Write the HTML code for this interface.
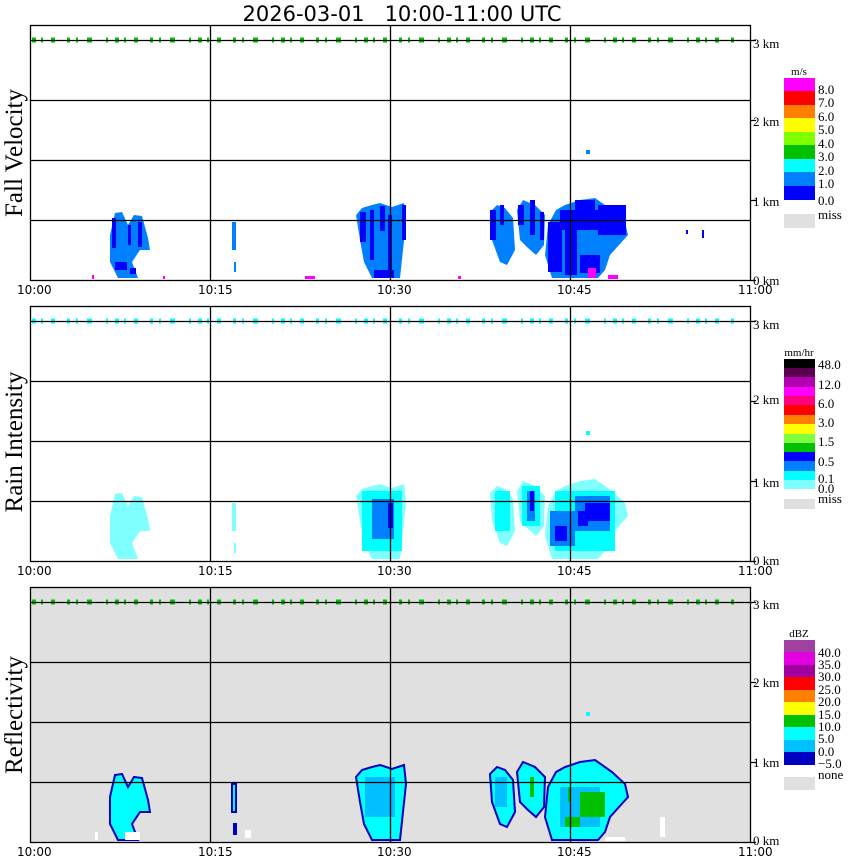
<!DOCTYPE html>
<html><head><meta charset="utf-8"><style>
html,body{margin:0;padding:0;background:#fff;width:850px;height:868px;overflow:hidden}
svg{display:block}
.t{font-family:"DejaVu Sans","Liberation Sans",sans-serif;font-size:12px}
.s{font-family:"Liberation Serif",serif;font-size:13px}
.cb{font-family:"Liberation Serif",serif;font-size:13px}
.yl{font-family:"Liberation Serif",serif;font-size:25px}
</style></head><body>
<svg width="850" height="868" viewBox="0 0 850 868" xmlns="http://www.w3.org/2000/svg">
<defs>
<g id="A"><polygon points="110,235 115,213 122,212 128,225 134,215 142,216 148,238 150,250 140,250 132,262 138,278 118,278 110,262"/></g>
<g id="B"><polygon points="356,215 362,208 372,205 380,203 392,207 404,203 406,222 403,250 400,278 372,278 364,262 360,240"/></g>
<g id="C1"><polygon points="490,212 497,205 505,208 513,218 515,250 507,265 500,262 492,240"/></g>
<g id="C2"><polygon points="517,210 523,200 535,205 545,215 544,245 536,255 528,248 520,240"/></g>
<g id="C3"><polygon points="548,225 556,210 565,205 580,200 595,198 612,210 625,222 628,235 610,255 605,270 598,278 552,278 545,255"/></g>
<g id="Cx"><rect x="232" y="222" width="4" height="28"/><rect x="234" y="262" width="2" height="10"/></g>
</defs>

<text x="402" y="21" text-anchor="middle" font-family="DejaVu Sans,Liberation Sans,sans-serif" font-size="21" style="white-space:pre" xml:space="preserve">2026-03-01   10:00-11:00 UTC</text>

<!-- Panel 1 -->
<g>
<g fill="#0080ff"><use href="#A"/><use href="#B"/><use href="#C1"/><use href="#C2"/><use href="#C3"/><use href="#Cx"/></g>
<g fill="#0000ff">
<rect x="112" y="218" width="4" height="30"/><rect x="128" y="225" width="3" height="20"/><rect x="138" y="222" width="4" height="25"/><rect x="115" y="262" width="12" height="8"/><rect x="130" y="268" width="6" height="6"/>
<rect x="360" y="212" width="6" height="30"/><rect x="370" y="210" width="4" height="50"/><rect x="380" y="206" width="5" height="25"/><rect x="388" y="215" width="4" height="60"/><rect x="402" y="205" width="4" height="35"/><rect x="374" y="270" width="20" height="8"/>
<rect x="490" y="210" width="6" height="30"/><rect x="500" y="205" width="4" height="20"/><rect x="518" y="205" width="6" height="20"/><rect x="530" y="200" width="5" height="35"/><rect x="540" y="212" width="4" height="28"/>
<rect x="548" y="222" width="14" height="50"/><rect x="560" y="210" width="40" height="20"/><rect x="575" y="200" width="20" height="30"/><rect x="598" y="205" width="28" height="30"/><rect x="565" y="230" width="12" height="45"/><rect x="580" y="255" width="20" height="18"/>
</g>
<rect x="588" y="268" width="8" height="10" fill="#ff00ff"/><rect x="608" y="275" width="10" height="4" fill="#ff00ff"/><rect x="92" y="275" width="2" height="4" fill="#ff00ff"/><rect x="305" y="276" width="10" height="3" fill="#ff00ff"/><rect x="163" y="276" width="2" height="3" fill="#ff00ff"/><rect x="458" y="276" width="3" height="3" fill="#ff00ff"/>
<rect x="586" y="150" width="4" height="4" fill="#0080ff"/><rect x="686" y="230" width="2" height="4" fill="#0000ff"/><rect x="702" y="230" width="2" height="8" fill="#0000ff"/>
<line x1="32" y1="40" x2="740" y2="40" stroke="#00c000" stroke-width="5" stroke-dasharray="4 5 2 8 4 12 3 6 2 9 5 14 2 7"/>
</g>

<!-- Panel 2 -->
<g transform="translate(0,281)">
<g fill="#80ffff"><use href="#A"/><use href="#B"/><use href="#C1"/><use href="#C2"/><use href="#C3"/><use href="#Cx"/></g>
<g fill="#00ffff"><rect x="362" y="210" width="40" height="60"/><rect x="495" y="210" width="15" height="40"/><rect x="522" y="205" width="18" height="40"/><rect x="555" y="210" width="60" height="60"/></g>
<g fill="#0080ff"><rect x="372" y="218" width="22" height="40"/><rect x="527" y="210" width="8" height="30"/><rect x="550" y="230" width="25" height="35"/><rect x="575" y="215" width="35" height="35"/></g>
<g fill="#0000ff"><rect x="388" y="222" width="5" height="25"/><rect x="530" y="210" width="4" height="20"/><rect x="555" y="245" width="12" height="15"/><rect x="585" y="222" width="25" height="18"/><rect x="578" y="230" width="10" height="15"/></g>
<rect x="586" y="150" width="4" height="4" fill="#00ffff"/>
<line x1="32" y1="40" x2="740" y2="40" stroke="#00ffff" stroke-width="5" stroke-dasharray="4 5 2 8 4 12 3 6 2 9 5 14 2 7"/>
</g>

<!-- Panel 3 -->
<g transform="translate(0,562)">
<rect x="30" y="25" width="720" height="255" fill="#e0e0e0"/>
<g fill="#00ffff" stroke="#0000c0" stroke-width="2"><use href="#A"/><use href="#B"/><use href="#C1"/><use href="#C2"/><use href="#C3"/><use href="#Cx"/></g>
<g fill="#00c0ff"><rect x="365" y="215" width="30" height="40"/><rect x="495" y="215" width="12" height="30"/><rect x="560" y="225" width="40" height="40"/></g>
<g fill="#00c000"><rect x="580" y="230" width="25" height="25"/><rect x="565" y="255" width="15" height="10"/><rect x="530" y="215" width="4" height="20"/><rect x="568" y="225" width="3" height="15"/></g>
<g fill="#fff"><rect x="125" y="270" width="15" height="8"/><rect x="245" y="268" width="6" height="8"/><rect x="605" y="275" width="20" height="4"/><rect x="660" y="255" width="5" height="20"/><rect x="95" y="270" width="3" height="8"/></g>
<rect x="586" y="150" width="4" height="4" fill="#00ffff"/>
<line x1="32" y1="40" x2="740" y2="40" stroke="#00c000" stroke-width="5" stroke-dasharray="4 5 2 8 4 12 3 6 2 9 5 14 2 7"/>
</g>

<g stroke="#000" stroke-width="1.3" fill="none">
<rect x="30.5" y="25.5" width="720" height="255"/>
<path d="M30 40.5H750M30 100.5H750M30 160.5H750M30 220.5H750M210.5 25V280M390.5 25V280M570.5 25V280"/>
<rect x="30.5" y="306.5" width="720" height="255"/>
<path d="M30 321.5H750M30 381.5H750M30 441.5H750M30 501.5H750M210.5 306V561M390.5 306V561M570.5 306V561"/>
<rect x="30.5" y="587.5" width="720" height="255"/>
<path d="M30 602.5H750M30 662.5H750M30 722.5H750M30 782.5H750M210.5 587V842M390.5 587V842M570.5 587V842"/>
<path d="M750 40.5H756M750 120.5H756M750 200.5H756M750 280.5H756M750 321.5H756M750 401.5H756M750 481.5H756M750 561.5H756M750 602.5H756M750 682.5H756M750 762.5H756M750 842.5H756"/>
</g>

<g class="t">
<text x="17" y="294">10:00</text><text x="198" y="294">10:15</text><text x="377" y="294">10:30</text><text x="557" y="294">10:45</text><text x="738" y="294">11:00</text>
<text x="17" y="575">10:00</text><text x="198" y="575">10:15</text><text x="377" y="575">10:30</text><text x="557" y="575">10:45</text><text x="738" y="575">11:00</text>
<text x="17" y="856">10:00</text><text x="198" y="856">10:15</text><text x="377" y="856">10:30</text><text x="557" y="856">10:45</text><text x="738" y="856">11:00</text>
</g>
<g class="s">
<text x="753" y="48">3 km</text><text x="753" y="126">2 km</text><text x="753" y="206">1 km</text><text x="753" y="285">0 km</text>
<text x="753" y="329">3 km</text><text x="753" y="404">2 km</text><text x="753" y="487">1 km</text><text x="753" y="565">0 km</text>
<text x="753" y="609">3 km</text><text x="753" y="687">2 km</text><text x="753" y="767">1 km</text><text x="753" y="845">0 km</text>
</g>
<g class="yl">
<text transform="translate(22,153) rotate(-90)" text-anchor="middle">Fall Velocity</text>
<text transform="translate(22,442) rotate(-90)" text-anchor="middle">Rain Intensity</text>
<text transform="translate(22,715) rotate(-90)" text-anchor="middle">Reflectivity</text>
</g>

<g>
<rect x="784" y="78" width="31" height="14" fill="#ff00ff"/><rect x="784" y="91" width="31" height="14" fill="#ff0000"/><rect x="784" y="105" width="31" height="14" fill="#ff8000"/><rect x="784" y="118" width="31" height="14" fill="#ffff00"/><rect x="784" y="132" width="31" height="14" fill="#80ff00"/><rect x="784" y="145" width="31" height="14" fill="#00c000"/><rect x="784" y="159" width="31" height="14" fill="#00ffff"/><rect x="784" y="172" width="31" height="14" fill="#0080ff"/><rect x="784" y="186" width="31" height="14" fill="#0000ff"/>
<rect x="784" y="214" width="31" height="14" fill="#e0e0e0"/>
<g class="cb"><text x="799" y="75" text-anchor="middle" font-size="11">m/s</text><text x="818" y="94">8.0</text><text x="818" y="107">7.0</text><text x="818" y="121">6.0</text><text x="818" y="134">5.0</text><text x="818" y="148">4.0</text><text x="818" y="161">3.0</text><text x="818" y="175">2.0</text><text x="818" y="188">1.0</text><text x="818" y="205">0.0</text><text x="818" y="219">miss</text></g>
</g>
<g>
<rect x="784" y="359" width="31" height="10" fill="#000"/><rect x="784" y="368" width="31" height="10" fill="#5a0050"/><rect x="784" y="377" width="31" height="10" fill="#b000b0"/><rect x="784" y="387" width="31" height="10" fill="#ff00ff"/><rect x="784" y="396" width="31" height="10" fill="#ff0080"/><rect x="784" y="405" width="31" height="10" fill="#ff0000"/><rect x="784" y="415" width="31" height="10" fill="#ff8000"/><rect x="784" y="424" width="31" height="10" fill="#ffff00"/><rect x="784" y="434" width="31" height="10" fill="#80ff40"/><rect x="784" y="443" width="31" height="10" fill="#00c000"/><rect x="784" y="452" width="31" height="10" fill="#0000ff"/><rect x="784" y="461" width="31" height="10" fill="#0080ff"/><rect x="784" y="471" width="31" height="10" fill="#00ffff"/><rect x="784" y="480" width="31" height="9" fill="#80ffff"/>
<rect x="784" y="499" width="31" height="10" fill="#e0e0e0"/>
<g class="cb"><text x="799" y="356" text-anchor="middle" font-size="11">mm/hr</text><text x="818" y="369">48.0</text><text x="818" y="389">12.0</text><text x="818" y="408">6.0</text><text x="818" y="427">3.0</text><text x="818" y="446">1.5</text><text x="818" y="466">0.5</text><text x="818" y="483">0.1</text><text x="818" y="493">0.0</text><text x="818" y="503">miss</text></g>
</g>
<g>
<rect x="784" y="640" width="31" height="13" fill="#a040a0"/><rect x="784" y="652" width="31" height="13" fill="#e000e0"/><rect x="784" y="665" width="31" height="13" fill="#a000a0"/><rect x="784" y="677" width="31" height="13" fill="#ff0000"/><rect x="784" y="690" width="31" height="13" fill="#ff8000"/><rect x="784" y="702" width="31" height="13" fill="#ffff00"/><rect x="784" y="715" width="31" height="13" fill="#00c000"/><rect x="784" y="727" width="31" height="13" fill="#00ffff"/><rect x="784" y="740" width="31" height="13" fill="#00c0ff"/><rect x="784" y="752" width="31" height="13" fill="#0000c0"/>
<rect x="784" y="777" width="31" height="13" fill="#e0e0e0"/>
<g class="cb"><text x="799" y="637" text-anchor="middle" font-size="11">dBZ</text><text x="818" y="657">40.0</text><text x="818" y="669">35.0</text><text x="818" y="681">30.0</text><text x="818" y="694">25.0</text><text x="818" y="706">20.0</text><text x="818" y="719">15.0</text><text x="818" y="731">10.0</text><text x="818" y="743">5.0</text><text x="818" y="756">0.0</text><text x="818" y="768">−5.0</text><text x="818" y="779">none</text></g>
</g>
</svg>
</body></html>
